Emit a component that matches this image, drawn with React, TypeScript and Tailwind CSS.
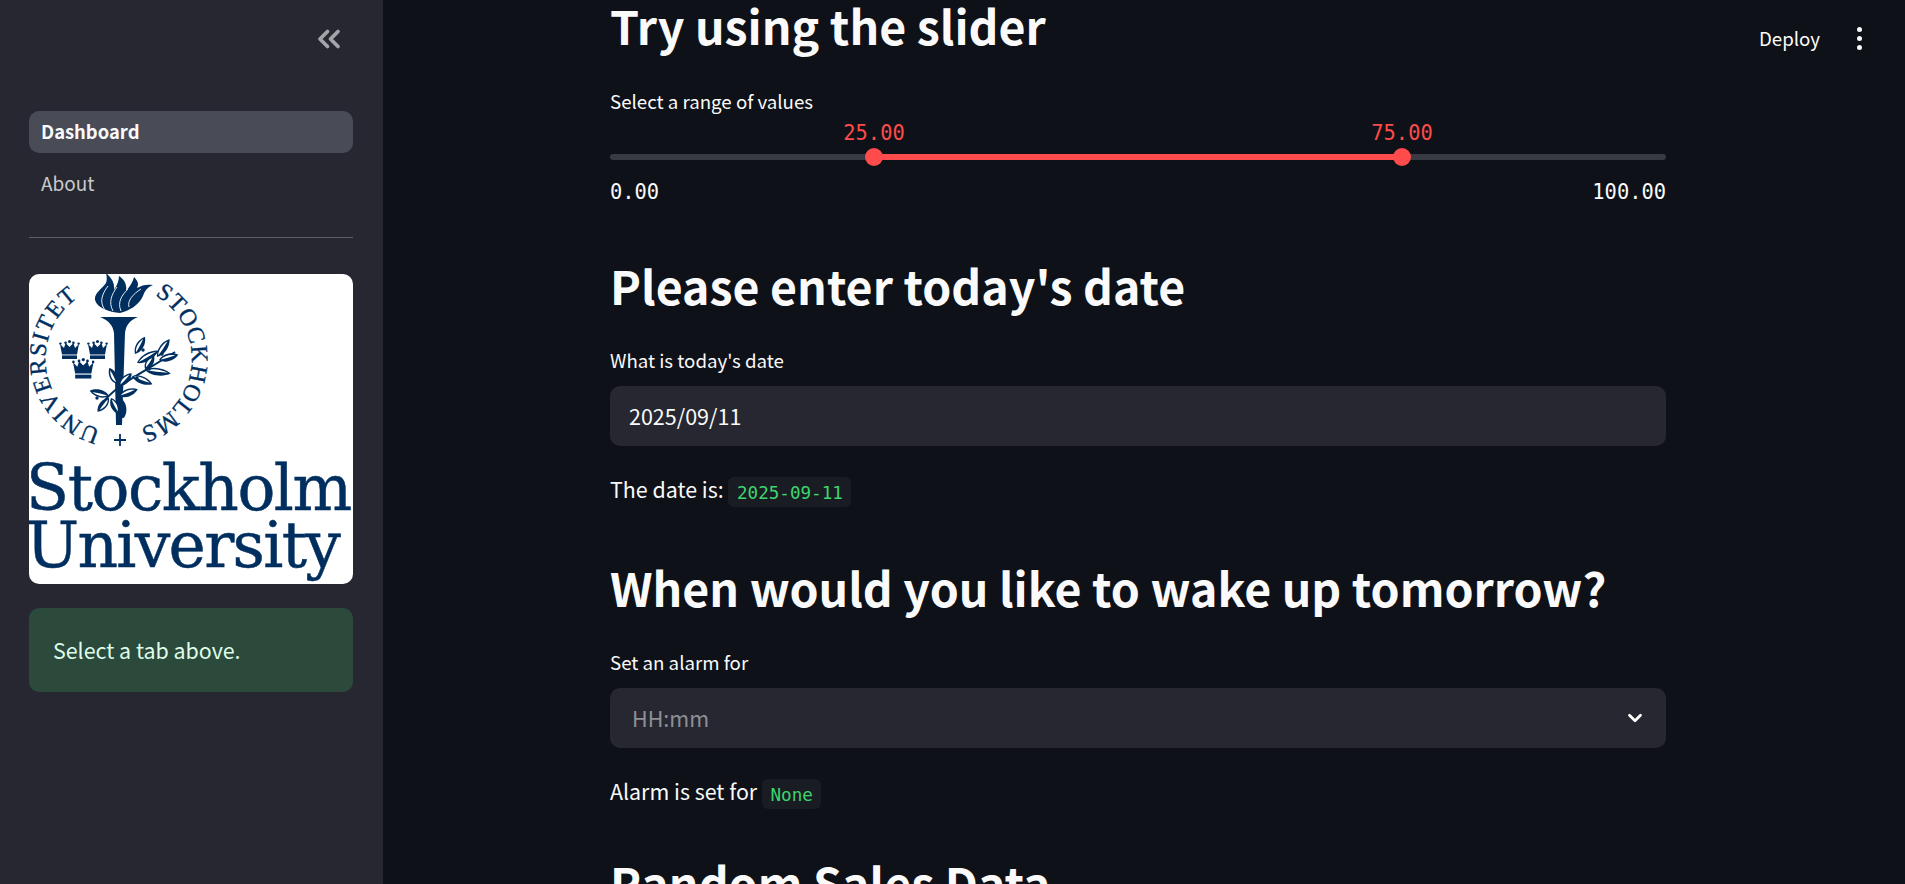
import React from 'react';
import { ChevronDown, ChevronsLeft } from 'lucide-react';

const sans = { fontFamily: '"Noto Sans CJK JP", "Noto Sans", sans-serif' };

const NAVY = '#002f5f';

const Crown: React.FC<{ x: number; y: number; s?: number }> = ({ x, y, s = 1 }) => (
  <g transform={`translate(${x} ${y}) scale(${s})`} fill={NAVY}>
    <path d="M0 4 L4 8 L5.6 3 L9.5 7 L13.4 3 L15 8 L19 4 L17 14.4 H2 Z" />
    <circle cx="0.4" cy="3.6" r="1.2" />
    <circle cx="5.6" cy="2.8" r="1.3" />
    <circle cx="9.5" cy="1.4" r="1.5" />
    <circle cx="13.4" cy="2.8" r="1.3" />
    <circle cx="18.6" cy="3.6" r="1.2" />
    <rect x="2" y="15.4" width="15" height="3.6" />
  </g>
);

const Leaf: React.FC<{ x: number; y: number; r: number; l?: number }> = ({ x, y, r, l = 18 }) => (
  <g transform={`translate(${x} ${y}) rotate(${r})`}>
    <path d={`M0 0 C${l * 0.25} -5 ${l * 0.7} -5 ${l} 0 C${l * 0.7} 5 ${l * 0.25} 5 0 0 Z`} fill={NAVY} />
    <path d={`M2 0 C${l * 0.3} -3 ${l * 0.6} -2.8 ${l - 3} -0.4 C${l * 0.6} 0.2 ${l * 0.3} 0.4 2 0 Z`} fill="#fff" />
  </g>
);

const Seal: React.FC = () => (
  <svg viewBox="0 0 324 186" width="324" height="186" className="block">
    <defs>
      <path id="ring" d="M 89.5 157.5 A 73 73 0 1 1 89.6 157.5" />
    </defs>
    <g fontFamily='"Liberation Serif", serif' fontSize="24" fill={NAVY} stroke={NAVY} strokeWidth="0.35">
      <text>
        <textPath href="#ring" startOffset="18" textLength="168" lengthAdjust="spacing">
          UNIVERSITET
        </textPath>
      </text>
      <text>
        <textPath href="#ring" startOffset="267" textLength="169" lengthAdjust="spacing">
          STOCKHOLMS
        </textPath>
      </text>
    </g>
    {/* flame */}
    <path
      fill={NAVY}
      d="M91 39 C80 38 68 34 66 26 C65 19 73 15 77 9 C78 6 78 3 77 -1 C83 4 86 10 85 16 C88 11 90 7 90 2 C96 6 98 11 97 17 C101 12 104 8 105 3 C109 7 110 10 108 14 C113 11 118 10 124 11 C119 13 116 16 114 22 C110 31 100 37 91 39 Z"
    />
    <g fill="none" stroke="#fff" strokeWidth="0.9">
      <path d="M76 36 C70 28 73 20 79 12" />
      <path d="M84 37 C79 28 83 20 88 13" />
      <path d="M92 37 C88 28 93 21 99 15" />
      <path d="M100 33 C98 27 104 20 112 15" />
    </g>
    {/* torch */}
    <path
      fill={NAVY}
      d="M71 43 H109 C101 46 97 51 96 59 L93 151 H87 L85 59 C84 51 79 46 71 43 Z"
    />
    <path d="M92 124 C97 128 99 136 96 142 C94 146 92 144 92 140 Z" fill={NAVY} />
    <Crown x={31} y={66} />
    <Crown x={59} y={66} />
    <Crown x={44} y={84} s={1.08} />
    {/* laurel */}
    <path d="M76 126 C92 108 112 100 146 78" stroke={NAVY} strokeWidth="2" fill="none" />
    <Leaf x={106} y={80} r={-60} l={20} />
    <Leaf x={108} y={89} r={-30} l={25} />
    <Leaf x={128} y={83} r={-55} l={22} />
    <Leaf x={130} y={86} r={-15} l={20} />
    <Leaf x={116} y={95} r={-55} l={16} />
    <Leaf x={116} y={96} r={8} l={26} />
    <Leaf x={103} y={102} r={22} l={22} />
    <Leaf x={88} y={110} r={-115} l={18} />
    <Leaf x={90} y={112} r={-45} l={18} />
    <Leaf x={90} y={122} r={-20} l={20} />
    <Leaf x={80} y={122} r={-165} l={20} />
    <Leaf x={80} y={124} r={130} l={18} />
    <Leaf x={82} y={124} r={65} l={18} />
    <circle cx="114" cy="76" r="1.7" fill={NAVY} />
    <circle cx="133" cy="80" r="1.7" fill={NAVY} />
    <circle cx="120" cy="95" r="1.7" fill={NAVY} />
    <circle cx="108" cy="104" r="1.7" fill={NAVY} />
    <circle cx="68" cy="124" r="1.7" fill={NAVY} />
    <path d="M85 166 H97 M91 160 V172" stroke={NAVY} strokeWidth="1.8" fill="none" />
  </svg>
);

const Heading: React.FC<{ children: React.ReactNode; className?: string }> = ({ children, className }) => (
  <h2 className={`text-[46.5px] leading-[60px] font-semibold text-[#fafafa] ${className ?? ''}`}>{children}</h2>
);

const Label: React.FC<{ children: React.ReactNode; className?: string }> = ({ children, className }) => (
  <div className={`text-[18.7px] leading-6 text-[#fafafa] ${className ?? ''}`}>{children}</div>
);

const Code: React.FC<{ children: React.ReactNode }> = ({ children }) => (
  <code className="font-['DejaVu_Sans_Mono',monospace] inline-block px-[8.5px] h-[30px] leading-[32px] rounded-md bg-[#1a1c24] text-[17.6px] text-[#3dd56d] align-middle">
    {children}
  </code>
);

export default function App() {
  return (
    <div className="flex h-screen overflow-hidden bg-[#0e1117] relative" style={sans}>
      {/* Sidebar */}
      <aside className="w-[383px] shrink-0 bg-[#262730] pl-[29px] pr-[30px] pt-[111px]">
        <ChevronsLeft
          size={36}
          strokeWidth={2.5}
          className="absolute left-[311px] top-[21px] text-[#a3a4a9]"
        />
        <div className="h-[42px] flex items-center px-3 rounded-[10px] bg-[#494b57] text-[18.4px] font-semibold text-[#fafafa]">
          Dashboard
        </div>
        <div className="h-[42px] mt-[9px] flex items-center px-3 text-[19px] text-[#c9cacc]">About</div>
        <hr className="mt-[33px] border-0 h-px bg-[#5c5d66]" />
        <div className="mt-9 h-[310px] rounded-[10px] bg-white overflow-hidden">
          <Seal />
          <div className="-ml-[3px] font-['DejaVu_Serif',serif] text-[#002f5f] text-[63px] leading-[58px] tracking-[-1.5px] whitespace-nowrap [-webkit-text-stroke:0.5px_#002f5f]">
            Stockholm
          </div>
          <div className="-ml-[3px] -mt-[1px] font-['DejaVu_Serif',serif] text-[#002f5f] text-[63px] leading-[58px] tracking-[-1.7px] whitespace-nowrap [-webkit-text-stroke:0.5px_#002f5f]">
            University
          </div>
        </div>
        <div className="mt-6 h-[84px] flex items-center px-6 rounded-[10px] bg-[#2b4a3b] text-[21.4px] text-[#dffde9]">
          Select a tab above.
        </div>
      </aside>

      {/* Main */}
      <main className="flex-1 pl-[227px]">
        <div className="w-[1056px]">
          <Heading className="mt-[-5px]">Try using the slider</Heading>
          <Label className="mt-[34px]">Select a range of values</Label>

          <div className="relative mt-[12px] h-[55px] font-['DejaVu_Sans_Mono',monospace]">
            <span className="absolute left-1/4 -top-[4px] -translate-x-1/2 text-[20.4px] leading-6 text-[#ff4b4b]">25.00</span>
            <span className="absolute left-3/4 -top-[4px] -translate-x-1/2 text-[20.4px] leading-6 text-[#ff4b4b]">75.00</span>
            <div className="absolute inset-x-0 top-[29px] h-1.5 rounded-full bg-[#373a43]" />
            <div className="absolute left-1/4 w-1/2 top-[29px] h-1.5 bg-[#ff4b4b]" />
            <div className="absolute left-1/4 top-[23px] -translate-x-1/2 w-[18px] h-[18px] rounded-full bg-[#ff4b4b]" />
            <div className="absolute left-3/4 top-[23px] -translate-x-1/2 w-[18px] h-[18px] rounded-full bg-[#ff4b4b]" />
          </div>
          <div className="flex justify-between text-[20.4px] leading-6 text-[#fafafa] font-['DejaVu_Sans_Mono',monospace]">
            <span>0.00</span>
            <span>100.00</span>
          </div>

          <Heading className="mt-[51px]">Please enter today's date</Heading>
          <Label className="mt-[33px]">What is today's date</Label>
          <div className="mt-[14px] h-[60px] flex items-center px-[19px] rounded-[10px] bg-[#262730] text-[21.5px] text-[#fafafa]">
            2025/09/11
          </div>
          <div className="mt-[27px] h-[32px] text-[21.4px] leading-[32px] text-[#fafafa]">
            The date is: <Code>2025-09-11</Code>
          </div>

          <Heading className="mt-[52px]">When would you like to wake up tomorrow?</Heading>
          <Label className="mt-[33px]">Set an alarm for</Label>
          <div className="mt-[14px] h-[60px] flex items-center justify-between pl-[22px] pr-[20px] rounded-[10px] bg-[#262730] text-[21.5px] text-[#8e8f95]">
            <span>HH:mm</span>
            <ChevronDown size={22} strokeWidth={3} className="text-white" />
          </div>
          <div className="mt-[27px] h-[32px] text-[21.4px] leading-[32px] text-[#fafafa]">
            Alarm is set for <Code>None</Code>
          </div>

          <Heading className="mt-[45px]">Random Sales Data</Heading>
        </div>
      </main>

      {/* Toolbar */}
      <div className="absolute top-[26px] left-[1759px] flex items-center text-[#fafafa]">
        <span className="text-[18.7px] leading-[24px]">Deploy</span>
        <span className="ml-[37px] flex flex-col gap-[4px]">
          <i className="block w-[5px] h-[5px] rounded-full bg-[#fafafa]" />
          <i className="block w-[5px] h-[5px] rounded-full bg-[#fafafa]" />
          <i className="block w-[5px] h-[5px] rounded-full bg-[#fafafa]" />
        </span>
      </div>
    </div>
  );
}
